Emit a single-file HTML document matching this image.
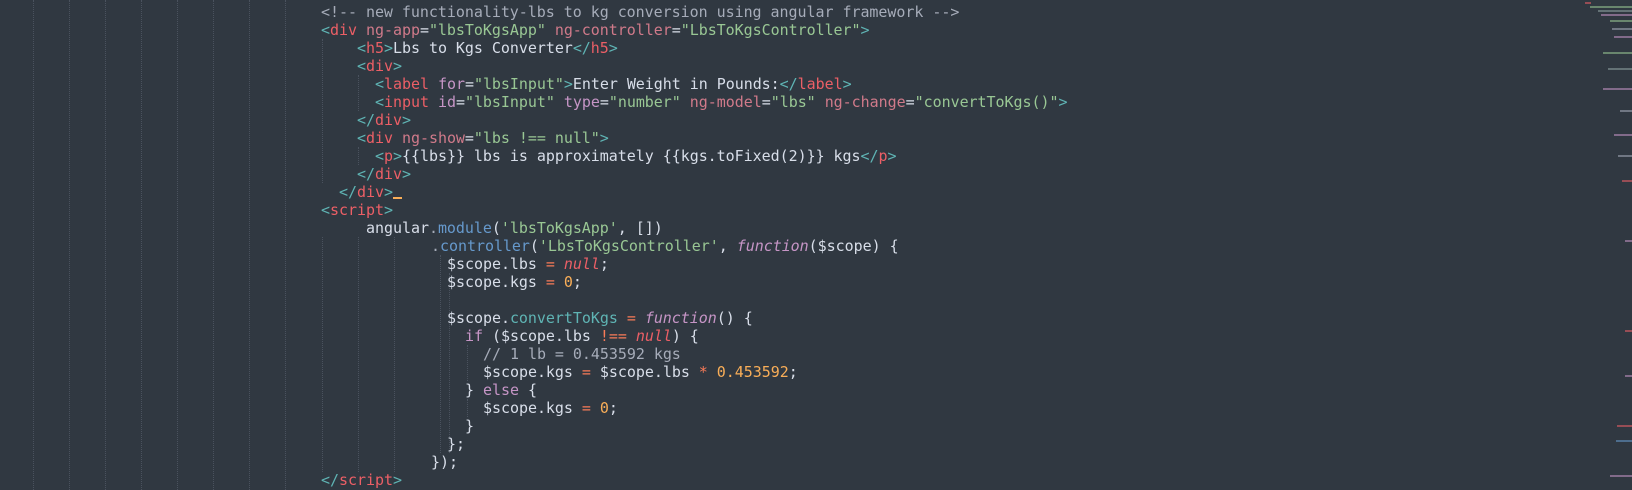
<!DOCTYPE html>
<html><head><meta charset="utf-8"><style>
html,body{margin:0;padding:0;background:#303841;width:1632px;height:490px;overflow:hidden}
.l{position:absolute;white-space:pre;font-family:"DejaVu Sans Mono","Liberation Mono",monospace;font-size:15px;letter-spacing:-0.04px;line-height:18px;color:#d8dee9}
.g{position:absolute;width:0;border-left:1px dotted #4a525e}
.t{color:#ec5f66}.p{color:#5fb4b4}.a{color:#d07a8a}.v{color:#c695c6}.s{color:#99c794}.c{color:#a6acb9}
.b{color:#6699cc}.o{color:#f9ae58}.n{color:#ec5f66;font-style:italic}.f{color:#c695c6;font-style:italic}.k{color:#c695c6}.q{color:#f97b58}.d{color:#a6acb9}.cy{color:#5fb4b4}
.cur{display:inline-block;width:9px;height:2px;background:#f9ae58;vertical-align:-2px}
.m{position:absolute;height:2px;opacity:.55}
</style></head><body>
<div class="g" style="left:33px;top:0;height:490px"></div>
<div class="g" style="left:69px;top:0;height:490px"></div>
<div class="g" style="left:105px;top:0;height:490px"></div>
<div class="g" style="left:141px;top:0;height:490px"></div>
<div class="g" style="left:177px;top:0;height:490px"></div>
<div class="g" style="left:213px;top:0;height:490px"></div>
<div class="g" style="left:249px;top:0;height:490px"></div>
<div class="g" style="left:285px;top:0;height:490px"></div>
<div class="g" style="left:322px;top:39px;height:144px"></div>
<div class="g" style="left:322px;top:237px;height:235px"></div>
<div class="g" style="left:358px;top:75px;height:36px"></div>
<div class="g" style="left:358px;top:147px;height:18px"></div>
<div class="g" style="left:358px;top:237px;height:235px"></div>
<div class="g" style="left:394px;top:237px;height:235px"></div>
<div class="g" style="left:440px;top:255px;height:198px"></div>
<div class="g" style="left:449px;top:273px;height:180px"></div>
<div class="g" style="left:467px;top:345px;height:36px"></div>
<div class="g" style="left:467px;top:399px;height:18px"></div>

<div class="l" style="left:321px;top:3px"><span class="c">&lt;!-- new functionality-lbs to kg conversion using angular framework --&gt;</span></div>
<div class="l" style="left:321px;top:21px"><span class="p">&lt;</span><span class="t">div</span> <span class="a">ng-app</span>=<span class="s">"lbsToKgsApp"</span> <span class="a">ng-controller</span>=<span class="s">"LbsToKgsController"</span><span class="p">&gt;</span></div>
<div class="l" style="left:357px;top:39px"><span class="p">&lt;</span><span class="t">h5</span><span class="p">&gt;</span>Lbs to Kgs Converter<span class="p">&lt;/</span><span class="t">h5</span><span class="p">&gt;</span></div>
<div class="l" style="left:357px;top:57px"><span class="p">&lt;</span><span class="t">div</span><span class="p">&gt;</span></div>
<div class="l" style="left:375px;top:75px"><span class="p">&lt;</span><span class="t">label</span> <span class="v">for</span>=<span class="s">"lbsInput"</span><span class="p">&gt;</span>Enter Weight in Pounds:<span class="p">&lt;/</span><span class="t">label</span><span class="p">&gt;</span></div>
<div class="l" style="left:375px;top:93px"><span class="p">&lt;</span><span class="t">input</span> <span class="v">id</span>=<span class="s">"lbsInput"</span> <span class="v">type</span>=<span class="s">"number"</span> <span class="a">ng-model</span>=<span class="s">"lbs"</span> <span class="a">ng-change</span>=<span class="s">"convertToKgs()"</span><span class="p">&gt;</span></div>
<div class="l" style="left:357px;top:111px"><span class="p">&lt;/</span><span class="t">div</span><span class="p">&gt;</span></div>
<div class="l" style="left:357px;top:129px"><span class="p">&lt;</span><span class="t">div</span> <span class="a">ng-show</span>=<span class="s">"lbs !== null"</span><span class="p">&gt;</span></div>
<div class="l" style="left:375px;top:147px"><span class="p">&lt;</span><span class="t">p</span><span class="p">&gt;</span>{{lbs}} lbs is approximately {{kgs.toFixed(2)}} kgs<span class="p">&lt;/</span><span class="t">p</span><span class="p">&gt;</span></div>
<div class="l" style="left:357px;top:165px"><span class="p">&lt;/</span><span class="t">div</span><span class="p">&gt;</span></div>
<div class="l" style="left:339px;top:183px"><span class="p">&lt;/</span><span class="t">div</span><span class="p">&gt;</span><span class="cur"></span></div>
<div class="l" style="left:321px;top:201px"><span class="p">&lt;</span><span class="t">script</span><span class="p">&gt;</span></div>
<div class="l" style="left:366px;top:219px">angular<span class="d">.</span><span class="b">module</span>(<span class="s">'lbsToKgsApp'</span>, [])</div>
<div class="l" style="left:431px;top:237px"><span class="d">.</span><span class="b">controller</span>(<span class="s">'LbsToKgsController'</span>, <span class="f">function</span>($scope) {</div>
<div class="l" style="left:447px;top:255px">$scope.lbs <span class="q">=</span> <span class="n">null</span>;</div>
<div class="l" style="left:447px;top:273px">$scope.kgs <span class="q">=</span> <span class="o">0</span>;</div>
<div class="l" style="left:447px;top:309px">$scope.<span class="cy">convertToKgs</span> <span class="q">=</span> <span class="f">function</span>() {</div>
<div class="l" style="left:465px;top:327px"><span class="k">if</span> ($scope.lbs <span class="q">!==</span> <span class="n">null</span>) {</div>
<div class="l" style="left:483px;top:345px"><span class="c">// 1 lb = 0.453592 kgs</span></div>
<div class="l" style="left:483px;top:363px">$scope.kgs <span class="q">=</span> $scope.lbs <span class="q">*</span> <span class="o">0.453592</span>;</div>
<div class="l" style="left:465px;top:381px">} <span class="k">else</span> {</div>
<div class="l" style="left:483px;top:399px">$scope.kgs <span class="q">=</span> <span class="o">0</span>;</div>
<div class="l" style="left:465px;top:417px">}</div>
<div class="l" style="left:447px;top:435px">};</div>
<div class="l" style="left:431px;top:453px">});</div>
<div class="l" style="left:321px;top:471px"><span class="p">&lt;/</span><span class="t">script</span><span class="p">&gt;</span></div>

<div class="m" style="left:1585px;top:2px;width:6px;background:#ec5f66"></div>
<div class="m" style="left:1590px;top:6px;width:42px;background:#99c794"></div>
<div class="m" style="left:1598px;top:10px;width:34px;background:#8fa3a3"></div>
<div class="m" style="left:1601px;top:14px;width:31px;background:#c695c6"></div>
<div class="m" style="left:1610px;top:20px;width:22px;background:#99c794"></div>
<div class="m" style="left:1612px;top:28px;width:20px;background:#a6acb9"></div>
<div class="m" style="left:1614px;top:36px;width:18px;background:#c695c6"></div>
<div class="m" style="left:1603px;top:52px;width:29px;background:#99c794"></div>
<div class="m" style="left:1608px;top:68px;width:24px;background:#8fa3a3"></div>
<div class="m" style="left:1603px;top:88px;width:29px;background:#c695c6"></div>
<div class="m" style="left:1620px;top:110px;width:12px;background:#a6acb9"></div>
<div class="m" style="left:1614px;top:134px;width:18px;background:#c695c6"></div>
<div class="m" style="left:1618px;top:155px;width:14px;background:#a6acb9"></div>
<div class="m" style="left:1622px;top:180px;width:10px;background:#ec5f66"></div>
<div class="m" style="left:1625px;top:240px;width:7px;background:#c695c6"></div>
<div class="m" style="left:1625px;top:330px;width:7px;background:#ec5f66"></div>
<div class="m" style="left:1625px;top:375px;width:7px;background:#c695c6"></div>
<div class="m" style="left:1617px;top:425px;width:15px;background:#ec5f66"></div>
<div class="m" style="left:1616px;top:440px;width:16px;background:#6699cc"></div>
<div class="m" style="left:1610px;top:475px;width:22px;background:#c695c6"></div>
</body></html>
